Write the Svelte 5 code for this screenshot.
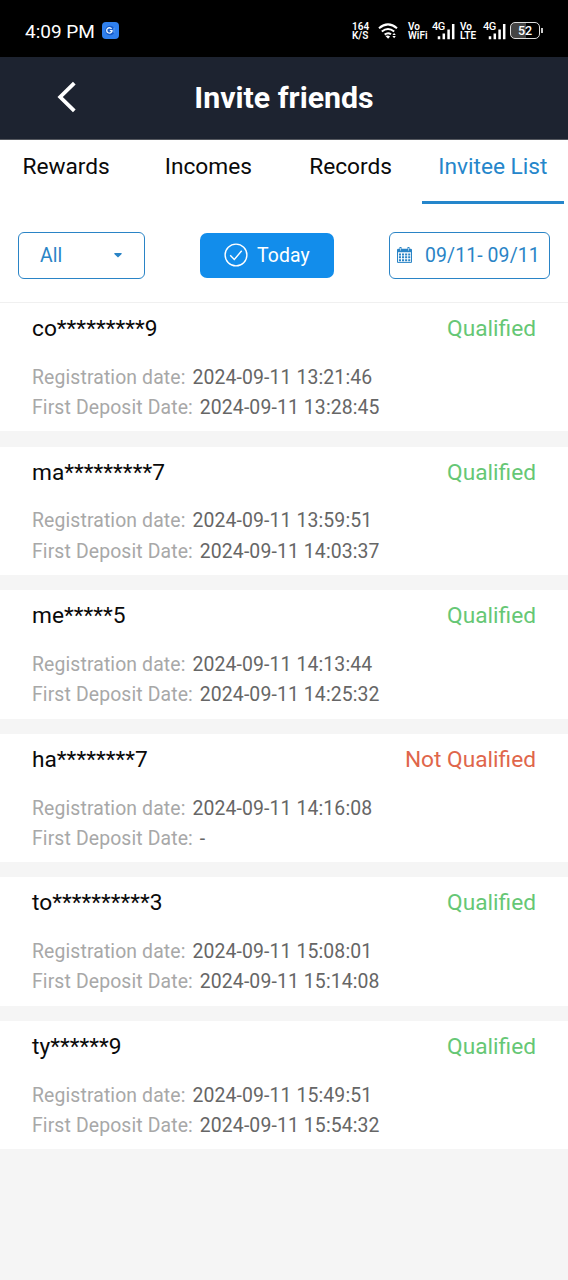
<script>
    const tabs = ['Rewards', 'Incomes', 'Records', 'Invitee List']
    let active = 'Invitee List'

    const invitees = [
        { name: 'co*********9', qualified: true, registered: '2024-09-11 13:21:46', deposit: '2024-09-11 13:28:45' },
        { name: 'ma*********7', qualified: true, registered: '2024-09-11 13:59:51', deposit: '2024-09-11 14:03:37' },
        { name: 'me*****5', qualified: true, registered: '2024-09-11 14:13:44', deposit: '2024-09-11 14:25:32' },
        { name: 'ha********7', qualified: false, registered: '2024-09-11 14:16:08', deposit: '-' },
        { name: 'to**********3', qualified: true, registered: '2024-09-11 15:08:01', deposit: '2024-09-11 15:14:08' },
        { name: 'ty******9', qualified: true, registered: '2024-09-11 15:49:51', deposit: '2024-09-11 15:54:32' }
    ]
</script>

{#snippet signal()}
    <svg class="signal" width="19" height="18" viewBox="0 0 19 18">
        <path d="M3 14.2v3M7.8 11.5v5.7M12.6 7.5v9.7M17.2 2v15.2" stroke="#fff" stroke-width="2.5" />
    </svg>
{/snippet}

<div class="status-bar">
    <span class="time">4:09 PM</span>
    <svg class="app-icon" width="17" height="17" viewBox="0 0 17 17">
        <rect width="17" height="17" rx="4" fill="#2f80ee" />
        <circle cx="8" cy="8.5" r="4.8" fill="#1558c8" />
        <path d="M9.6 6.8A2.7 2.7 0 1 0 10 9.2V8.6H7.8" fill="none" stroke="#e4f4ff" stroke-width="1.4" />
        <path d="M12 5.8v5" stroke="#65adff" stroke-width="1.1" />
    </svg>
    <div class="indicators">
        <div class="stack speed"><span>164</span><span>K/S</span></div>
        <svg class="wifi" width="20" height="16" viewBox="0 0 20 16">
            <g fill="none" stroke="#fff" stroke-width="2">
                <path d="M1 5.2Q10-2.4 19 5.2" />
                <path d="M3.8 8.5Q10 3.4 16.2 8.5" />
                <path d="M6.7 11.6Q10 9 13 11.3" />
            </g>
            <path d="M7.5 13l2.6 2.7 2-2.3q-2.3-1.5-4.6-.4zM14.4 11.9l1.7-2 1.7 2zM14.4 13.1h3.4l-1.7 2.2z" fill="#fff" />
        </svg>
        <div class="stack vowifi"><span>Vo</span><span>WiFi</span></div>
        <div class="network"><span>4G</span>{@render signal()}</div>
        <div class="stack volte"><span>Vo</span><span>LTE</span></div>
        <div class="network second"><span>4G</span>{@render signal()}</div>
        <div class="battery"><span>52</span></div>
        <i class="battery-tip"></i>
    </div>
</div>

<header>
    <button class="back" aria-label="Back">
        <svg width="20" height="32" viewBox="0 0 20 32">
            <path d="M17.3 2.2L3.2 16l14.1 13.8" fill="none" stroke="#fff" stroke-width="3.8" />
        </svg>
    </button>
    <h1>Invite friends</h1>
</header>

<nav>
    {#each tabs as tab}
        <button class:active={tab === active} on:click={() => (active = tab)}>{tab}</button>
    {/each}
</nav>

<div class="filters">
    <button class="filter all">
        All
        <svg width="8" height="5" viewBox="0 0 8 5">
            <path d="M.5 0h7q.5.8-.3 1.5L4 4.6.8 1.5Q0 .8.5 0z" fill="#2a84c6" />
        </svg>
    </button>
    <button class="filter today">
        <svg width="24" height="24" viewBox="0 0 24 24" fill="none" stroke="#fff" stroke-width="1.4">
            <circle cx="12" cy="12" r="10.9" />
            <path d="M6.2 12.3l4.1 4.2 7.4-8.7" />
        </svg>
        Today
    </button>
    <button class="filter range">
        <svg width="15" height="16" viewBox="0 0 15 16">
            <path d="M1.2 1.8H13.8Q15 1.8 15 3V5.2H0V3Q0 1.8 1.2 1.8z" fill="#2a84c6" />
            <path d="M3.5 0v3.4M11.5 0v3.4" stroke="#2a84c6" stroke-width="2" />
            <path d="M3.5 1v2.6M11.5 1v2.6" stroke="#fff" stroke-width=".6" />
            <path d="M.5 5v10.4h14V5" fill="none" stroke="#2a84c6" />
            <path d="M1.9 7.4h11.4M1.9 10.3h11.4M1.9 13.2h11.4" stroke="#2a84c6" stroke-width="2" stroke-dasharray="2.1 1" />
        </svg>
        09/11- 09/11
    </button>
</div>

<main>
    {#each invitees as invitee}
        <article>
            <div class="title">
                <h2>{invitee.name}</h2>
                <span class="status" class:failed={!invitee.qualified}>
                    {invitee.qualified ? 'Qualified' : 'Not Qualified'}
                </span>
            </div>
            <p>Registration date: <span>{invitee.registered}</span></p>
            <p>First Deposit Date: <span>{invitee.deposit}</span></p>
        </article>
    {/each}
</main>

<style>
    :global(body) {
        background: #f5f5f5;
        font-family: Roboto, sans-serif;
    }

    button {
        padding: 0;
        border: none;
        background: none;
        font: inherit;
        color: inherit;
    }

    .status-bar {
        box-sizing: border-box;
        height: 57px;
        padding: 5px 25px 0;
        display: flex;
        align-items: center;
        background: #000;
        color: #fff;
    }

    .time {
        width: 77px;
        font-size: 19px;
        white-space: nowrap;
    }

    .app-icon {
        margin-top: -2px;
    }

    .indicators {
        margin-left: auto;
        display: flex;
        align-items: center;
    }

    .stack {
        display: flex;
        flex-direction: column;
        font-size: 10px;
        font-weight: 600;
        line-height: 9.5px;
    }

    .speed {
        width: 26px;
    }

    .wifi {
        margin-right: 10px;
    }

    .vowifi {
        width: 24px;
    }

    .network {
        width: 28px;
        display: flex;
    }

    .network span {
        width: 4px;
        font-size: 11px;
        font-weight: 500;
        line-height: 10px;
        letter-spacing: -.4px;
    }

    .signal {
        flex: none;
    }

    .volte {
        width: 23px;
    }

    .network.second {
        width: 27px;
    }

    .battery {
        box-sizing: border-box;
        width: 30px;
        height: 17px;
        margin-top: -1px;
        border: 1.5px solid #ddd;
        border-radius: 5px;
        background: linear-gradient(90deg, #444 52%, #000 52%);
        font-size: 12.5px;
        font-weight: 500;
        line-height: 15px;
        text-align: center;
    }

    .battery-tip {
        width: 2px;
        height: 5px;
        margin: -1px 0 0 1px;
        background: #ccc;
    }

    header {
        box-sizing: border-box;
        height: 83px;
        padding-bottom: 2px;
        display: grid;
        grid-template-columns: 100px 1fr 100px;
        align-items: center;
        background: #1d2330;
        border-bottom: 1px solid #55585f;
        color: #fff;
    }

    .back {
        padding-left: 57px;
        display: flex;
    }

    h1 {
        margin: 0;
        font-size: 30.3px;
        font-weight: 700;
        text-align: center;
    }

    /* tabs start slightly off the left edge */
    nav {
        height: 64px;
        margin-left: -5px;
        padding-right: 4px;
        display: flex;
        background: #fff;
    }

    nav button {
        box-sizing: border-box;
        flex: 1 1 0;
        padding-bottom: 8px;
        border-bottom: 3px solid transparent;
        font-size: 22.7px;
        color: #0a0a0a;
    }

    nav button.active {
        border-color: #2586cb;
        color: #2586cb;
    }

    .filters {
        box-sizing: border-box;
        height: 99px;
        padding: 4px 18px 0;
        display: flex;
        align-items: center;
        justify-content: space-between;
        background: #fff;
        border-bottom: 1px solid #f0f0f0;
    }

    .filter {
        box-sizing: border-box;
        height: 47px;
        display: flex;
        align-items: center;
        border: 1.5px solid #2a84c6;
        border-radius: 6px;
        font-size: 19.4px;
        letter-spacing: .12px;
        color: #2a84c6;
    }

    .all {
        width: 127px;
        padding: 0 22px 0 21px;
        justify-content: space-between;
    }

    .today {
        width: 134px;
        height: 45px;
        padding-left: 24px;
        gap: 9px;
        border: none;
        border-radius: 7px;
        background: #128deb;
        color: #fff;
    }

    .range {
        width: 161px;
        padding-left: 7px;
        gap: 13px;
        white-space: nowrap;
    }

    main {
        display: flex;
        flex-direction: column;
        gap: 15.2px;
    }

    article {
        box-sizing: border-box;
        height: 128.4px;
        padding: 11px 32px 0;
        background: #fff;
    }

    .title {
        height: 48.8px;
        display: flex;
        align-items: flex-start;
        justify-content: space-between;
        font-size: 22.7px;
        line-height: 30px;
    }

    h2 {
        margin: 0;
        font-size: inherit;
        font-weight: 400;
        color: #0a0a0a;
    }

    .status {
        color: #66c775;
    }

    .status.failed {
        color: #e0664b;
    }

    p {
        margin: 0;
        font-size: 19.4px;
        line-height: 30.2px;
        letter-spacing: .12px;
        color: #a8a8a8;
    }

    p span {
        margin-left: 2px;
        color: #666;
    }
</style>
